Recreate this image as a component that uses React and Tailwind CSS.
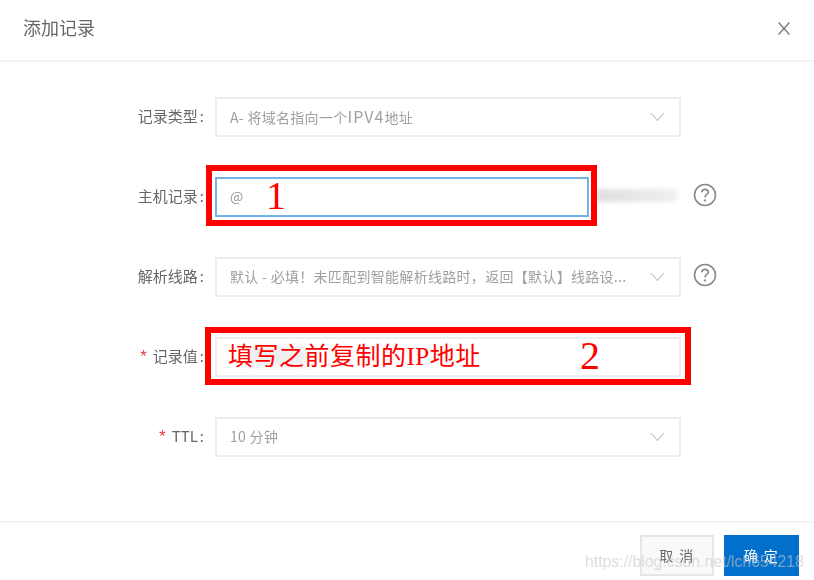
import React from "react";

const Chevron = () => (
  <svg width="15" height="10" viewBox="0 0 15 10" fill="none" className="shrink-0">
    <path d="M1 1L7.5 8.5L14 1" stroke="#bdbdbd" strokeWidth="1.1" />
  </svg>
);

const Help = () => (
  <svg width="24" height="24" viewBox="0 0 24 24" fill="none" className="shrink-0">
    <circle cx="12" cy="12" r="10.5" stroke="#8a8a8a" strokeWidth="1.6" />
    <path d="M8.6 9.3C8.8 7.4 10.2 6.4 12 6.4C13.9 6.4 15.3 7.6 15.3 9.2C15.3 11.4 12 11.6 12 14.4" stroke="#8a8a8a" strokeWidth="1.6" />
    <circle cx="12" cy="17.4" r="1.1" fill="#8a8a8a" />
  </svg>
);

function Row({ label, required, children, after }) {
  return (
    <div className="flex h-[40px] items-center">
      <div className="flex w-[205px] shrink-0 items-center justify-end whitespace-nowrap pb-[2px] text-[15px] text-[#666]">
        {required && <span className="mr-[6px] text-[17px] leading-none text-[#e4393c]" style={{ fontFamily: '"Liberation Sans", sans-serif' }}>*</span>}
        <span>{label}</span>
        <span className="ml-[2px] mr-[1px]">:</span>
      </div>
      <div className="ml-[10px] w-[466px] shrink-0">{children}</div>
      {after}
    </div>
  );
}

function Select({ children }) {
  return (
    <div className="flex h-[40px] items-center justify-between border-2 border-[#eeeeee] pl-[13px] pr-[14px] text-[14px] text-[#a0a0a0]">
      <span className="truncate pb-[2px] tracking-[0.3px]">{children}</span>
      <Chevron />
    </div>
  );
}

export default function App() {
  return (
    <div
      className="relative flex h-[580px] w-[814px] flex-col overflow-hidden bg-white"
      style={{ fontFamily: '"Noto Sans CJK SC", "Liberation Sans", sans-serif' }}
    >
      <header className="flex h-[62px] shrink-0 items-center justify-between border-b-2 border-[#f3f3f3] pb-[6px] pl-[23px] pr-[24px] blur-[0.4px]">
        <h1 className="text-[18px] font-normal text-[#666]">添加记录</h1>
        <svg width="12" height="13" viewBox="0 0 12 13" fill="none" className="mt-[2px]">
          <path d="M0.6 0.6L11.4 12.4M11.4 0.6L0.6 12.4" stroke="#808080" strokeWidth="1.5" />
        </svg>
      </header>

      <main className="flex flex-1 flex-col gap-[40px] pt-[35px] blur-[0.4px]">
        <Row label="记录类型">
          <Select>
            A- 将域名指向一个<span className="text-[16px] tracking-[1px]">IPV4</span>地址
          </Select>
        </Row>
        <Row
          label="主机记录"
          after={
            <div className="mb-[4px] ml-[14px] flex items-center">
              <div className="-ml-[98px] mr-[16px] h-[13px] w-[80px] bg-gradient-to-r from-[#dfdfdf] to-[#f0f0f0] blur-[2px]" />
              <Help />
            </div>
          }
        >
          <div className="flex h-[40px] w-[374px] items-center border-2 border-[#74b3e6] pb-[2px] pl-[13px] text-[14px] text-[#999]">
            @
          </div>
        </Row>
        <Row label="解析线路" after={<div className="mb-[4px] ml-[12px]"><Help /></div>}>
          <Select>默认 - 必填！未匹配到智能解析线路时，返回【默认】线路设...</Select>
        </Row>
        <Row label="记录值" required>
          <div className="flex h-[40px] items-center border-2 border-[#eeeeee] pl-[30px]">
            <div className="h-[20px] w-[60px] bg-[#eeeeee] blur-[4px]" />
          </div>
        </Row>
        <Row label="TTL" required>
          <Select>10 分钟</Select>
        </Row>
      </main>

      <footer className="flex h-[59px] shrink-0 justify-end gap-[10px] border-t-2 border-[#f0f3f7] pr-[15px] pt-[12px] blur-[0.4px]">
        <button className="h-[41px] w-[74px] border-2 border-[#e6e6e6] bg-[#f9f9f9] text-[14px] tracking-[1.5px] text-[#666]">取 消</button>
        <button className="h-[41px] w-[75px] bg-[#0070cc] text-[14px] tracking-[1.5px] text-white">确 定</button>
      </footer>

      <div className="absolute left-[206px] top-[165px] flex h-[61px] w-[391px] items-center border-[6px] border-[#ff0000] pl-[54px]">
        <span className="text-[40px] leading-none text-[#ff0000]" style={{ fontFamily: '"Liberation Serif", serif' }}>1</span>
      </div>
      <div
        className="absolute left-[205px] top-[327px] flex h-[58px] w-[486px] items-center justify-between border-[6px] border-[#ff0000] pl-[17px] pr-[85px] text-[#ff0000]"
        style={{ fontFamily: '"Liberation Serif", "Noto Sans CJK SC", serif' }}
      >
        <span className="whitespace-nowrap text-[25px] leading-none tracking-[0.5px]">填写之前复制的IP地址</span>
        <span className="text-[40px] leading-none">2</span>
      </div>

      <div
        className="absolute left-[585px] top-[550px] whitespace-nowrap text-[15.8px] text-[#c8c8c8]/60"
        style={{ fontFamily: '"Liberation Sans", sans-serif' }}
      >
        https://blog.csdn.net/lch654218
      </div>
    </div>
  );
}
